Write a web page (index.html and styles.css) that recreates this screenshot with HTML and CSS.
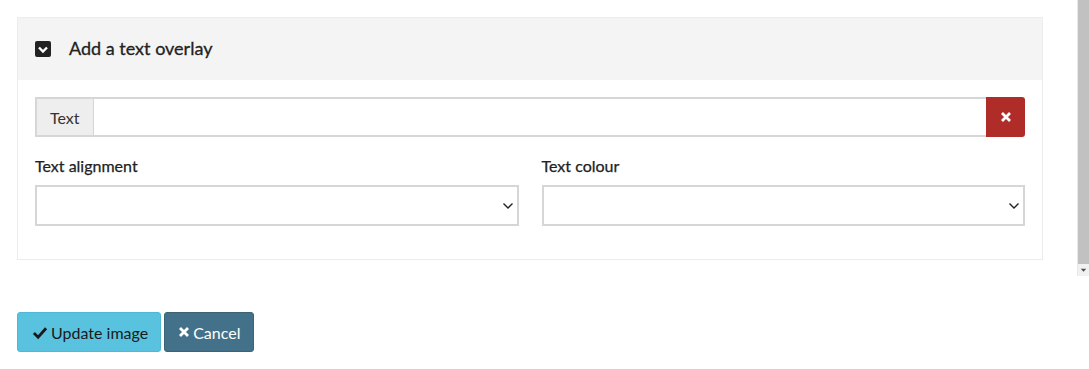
FILE: index.html
```html
<!DOCTYPE html>
<html lang="en">
  <head>
    <meta charset="UTF-8" />
    <title>Text overlay</title>
    <link rel="stylesheet" href="styles.css">
  </head>
  <body>
    <div class="frame">
      <div class="scroll-area">
        <div class="panel">
          <div class="panel-heading">
            <svg class="check-box" viewBox="0 0 16 16" width="16" height="16">
              <rect x="0" y="0" width="16" height="16" rx="2" fill="#222" />
              <path d="M4 6.5l4 4 4-4" fill="none" stroke="#fff" stroke-width="2.4" />
            </svg>
            <span class="panel-title">Add a text overlay</span>
          </div>
          <div class="panel-body">
            <div class="input-group">
              <span class="addon">Text</span>
              <input type="text" class="text-input" />
              <button class="btn-clear">
                <svg viewBox="0 0 12 12" width="12" height="12">
                  <path d="M2 2l8 8M10 2l-8 8" stroke="#fff" stroke-width="2.8" />
                </svg>
              </button>
            </div>
            <div class="row">
              <div class="field">
                <label>Text alignment</label>
                <select class="select"></select>
              </div>
              <div class="field">
                <label>Text colour</label>
                <select class="select"></select>
              </div>
            </div>
          </div>
        </div>
      </div>
      <!-- scrollbar of the modal body -->
      <div class="scrollbar">
        <div class="thumb"></div>
        <div class="arrow">
          <svg viewBox="0 0 12 12" width="12" height="12">
            <path d="M3 4.5h6l-3 3.5z" fill="#505050" />
          </svg>
        </div>
      </div>
    </div>

    <div class="actions">
      <button class="btn btn-update">
        <svg viewBox="0 0 16 16" width="16" height="15">
          <path d="M1.5 8.5l4.5 4.5 8.5-9.5" fill="none" stroke="#1a1a1a" stroke-width="3" />
        </svg>Update image</button>
      <button class="btn btn-cancel">
        <svg viewBox="0 0 12 12" width="12" height="12">
          <path d="M2 2l8 8M10 2l-8 8" stroke="#fff" stroke-width="2.8" />
        </svg>Cancel</button>
    </div>
  </body>
</html>
```

FILE: styles.css
```css
* {
  box-sizing: border-box;
  margin: 0;
  padding: 0;
}

body {
  font-family: Lato, "Open Sans", sans-serif;
  font-size: 16px;
  color: #333;
  background: #fff;
}

.frame {
  display: flex;
  height: 276px;
}

.scroll-area {
  flex: 1;
  padding: 17px 34px 0 17px;
  overflow: hidden;
}

.scrollbar {
  width: 12px;
  display: flex;
  flex-direction: column;
  background: #f1f1f1;
  border-left: 1px solid #e8e8e8;
}

.thumb {
  flex: 1;
  background: #c1c1c1;
}

.arrow {
  height: 12px;
  display: flex;
  align-items: center;
  justify-content: center;
}

.panel {
  border: 1px solid #ececec;
  background: #fff;
  height: 243px;
}

.panel-heading {
  display: flex;
  align-items: center;
  gap: 18px;
  height: 62px;
  padding: 0 17px;
  background: #f4f4f4;
}

.panel-title {
  font-size: 18px;
  font-weight: 400;
  color: #222;
  padding-bottom: 2px;
  -webkit-text-stroke: 0.3px #222;
}

.panel-body {
  padding: 17px;
}

.input-group {
  display: flex;
  height: 40px;
}

.addon {
  display: flex;
  align-items: center;
  padding: 0 13px;
  background: #eee;
  border: 2px solid #d6d6d6;
  border-right: 1px solid #d6d6d6;
  color: #333;
}

.text-input {
  flex: 1;
  border: 2px solid #d6d6d6;
  border-left: none;
  border-right: none;
  font: inherit;
  outline: none;
}

.btn-clear {
  width: 39px;
  border: none;
  background: #b02c28;
  border-radius: 0 3px 3px 0;
  display: flex;
  align-items: center;
  justify-content: center;
  padding-bottom: 1px;
}

.row {
  display: grid;
  grid-template-columns: 1fr 1fr;
  gap: 23px;
  margin-top: 17px;
}

.field label {
  display: block;
  font-weight: 400;
  font-size: 16px;
  color: #222;
  -webkit-text-stroke: 0.25px #222;
  line-height: 22px;
  margin-bottom: 8px;
  margin-top: 1px;
}

.select {
  display: block;
  width: 100%;
  height: 41px;
  border: 2px solid #d6d6d6;
  background: #fff url("data:image/svg+xml,%3Csvg xmlns='http://www.w3.org/2000/svg' width='12' height='8'%3E%3Cpath d='M1.5 1.5l4.5 4.5 4.5-4.5' fill='none' stroke='%23222' stroke-width='1.4'/%3E%3C/svg%3E") right 3px center no-repeat;
  appearance: none;
  -webkit-appearance: none;
  border-radius: 0;
  font: inherit;
}

.actions {
  padding: 36px 17px 0;
  display: flex;
  gap: 3px;
}

.btn {
  height: 40px;
  border-radius: 3px;
  font-family: Lato, "Open Sans", sans-serif;
  font-size: 16px;
  display: flex;
  align-items: center;
  gap: 3px;
  cursor: pointer;
}

.btn-update {
  background: #59c3df;
  border: 1px solid #4eb9d6;
  color: #1a1a1a;
  padding: 0 12px 0 14px;
}

.btn-cancel {
  background: #44718a;
  border: 1px solid #3b6479;
  color: #fff;
  padding: 0 13px 0 13px;
}
```
